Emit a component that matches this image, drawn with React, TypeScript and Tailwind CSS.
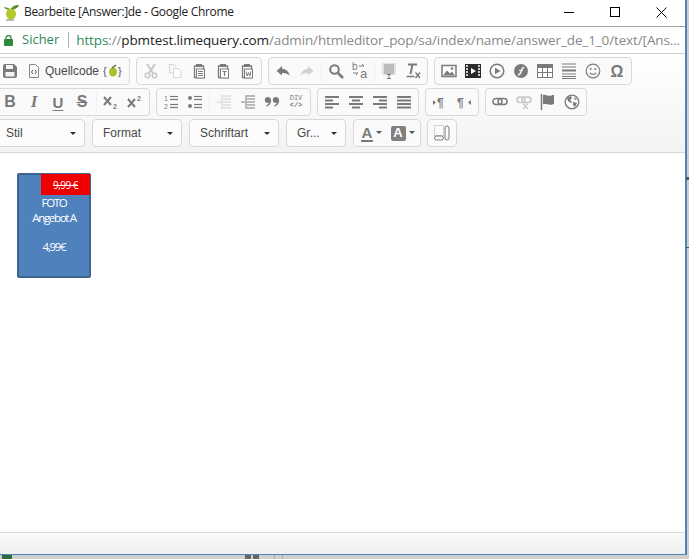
import React from 'react';

const G = '#7a7a7a';
const L = '#c8c8c8';

const Svg = ({ children, w = 16, h = 16 }: { children: React.ReactNode; w?: number; h?: number }) => (
  <svg width={w} height={h} viewBox={`0 0 ${w} ${h}`} fill="none">
    {children}
  </svg>
);

const Lines = ({ x, items, color = G, sw = 1.5 }: { x?: number; items: [number, number, number][]; color?: string; sw?: number }) => (
  <g stroke={color} strokeWidth={sw} transform={`translate(${x ?? 0} 0)`}>
    {items.map(([a, b, y], i) => (
      <path key={i} d={`M${a} ${y}H${b}`} />
    ))}
  </g>
);

const Clip = ({ children }: { children?: React.ReactNode }) => (
  <Svg>
    <path d="M5 3H3.500V14.500H12.500V3H11" stroke={G} strokeWidth="1.300" />
    <rect x="5" y="1" width="6" height="3" fill={G} />
    <rect x="5.500" y="6" width="8" height="9" fill="#fff" stroke={G} />
    {children}
  </Svg>
);

const icons: Record<string, React.ReactNode> = {
  save: (
    <Svg>
      <path d="M1 3a2 2 0 0 1 2-2h9l3 3v9a2 2 0 0 1-2 2H3a2 2 0 0 1-2-2z" fill={G} />
      <rect x="4" y="2" width="7" height="4" fill="#f4f4f4" />
      <rect x="3.500" y="9" width="9" height="4.500" fill="#f4f4f4" />
    </Svg>
  ),
  lime: (
    <Svg w={20}>
      <text x="0" y="12" fontSize="11" fill="#555" fontFamily="Liberation Sans">{'{'}</text>
      <text x="15" y="12" fontSize="11" fill="#555" fontFamily="Liberation Sans">{'}'}</text>
      <ellipse cx="10" cy="9" rx="4" ry="4.500" fill="#a8bf2e" />
      <path d="M9 5l4-3" stroke="#4d6b1c" strokeWidth="1.300" />
    </Svg>
  ),
  cut: (
    <Svg>
      <path d="M4 1l6 9M12 1l-6 9" stroke={L} strokeWidth="2" />
      <circle cx="4.500" cy="12.500" r="2.300" stroke={L} strokeWidth="1.500" />
      <circle cx="11.500" cy="12.500" r="2.300" stroke={L} strokeWidth="1.500" />
    </Svg>
  ),
  copy: (
    <Svg>
      <path d="M2.500 1.500H7L9 4M2.500 1.500V10H6" stroke="#d4d4d4" />
      <path d="M6.500 5.500H11L14 8V14.500H6.500z" stroke="#d4d4d4" fill="#fff" />
    </Svg>
  ),
  paste: <Clip><Lines items={[[7, 12, 8.500], [7, 12, 10.500], [7, 12, 12.500]]} sw={1} /></Clip>,
  pasteT: <Clip><path d="M7.500 8.500h4M9.500 8.500v4.500" stroke={G} strokeWidth="1.200" /></Clip>,
  pasteW: <Clip><path d="M7 8.500l1.200 4.500 1.300-3.500 1.300 3.500L12 8.500" stroke={G} /></Clip>,
  undo: (
    <Svg>
      <path d="M7 3L1.500 8 7 12.500V10c3-.3 5.500.5 7.500 2.500C14 8.500 11 6 7 5.800z" fill={G} />
    </Svg>
  ),
  redo: (
    <Svg>
      <path d="M9 3l5.500 5L9 12.500V10c-3-.3-5.500.5-7.500 2.500C2 8.500 5 6 9 5.800z" fill="#d2d2d2" />
    </Svg>
  ),
  find: (
    <Svg>
      <circle cx="6.500" cy="6.500" r="4.300" stroke={G} strokeWidth="2" />
      <path d="M10 10l5 5" stroke={G} strokeWidth="2.500" />
    </Svg>
  ),
  replace: (
    <Svg w={18} h={20}>
      <text x="1" y="9" fontSize="10" fill={G} fontFamily="Liberation Sans">b</text>
      <text x="9" y="17" fontSize="13" fill={G} fontFamily="Liberation Sans">a</text>
      <path d="M8 5h5l-2-2M2 12h5l-2 2" stroke={G} />
    </Svg>
  ),
  selectAll: (
    <Svg>
      <rect x="1" y="0" width="14" height="12" fill="#e2e2e2" />
      <Lines items={[[3, 13, 2], [3, 13, 4], [3, 13, 6], [3, 13, 8], [3, 13, 10]]} color="#949494" sw={1} />
      <path d="M6 11.500h4M6 15.500h4M8 11v4" stroke={G} />
    </Svg>
  ),
  removeFormat: (
    <Svg>
      <path d="M3 1.500h9M7.500 1.500L5.500 11" stroke={G} strokeWidth="2" />
      <path d="M1.500 13.500h8" stroke={G} strokeWidth="1.500" />
      <path d="M10.500 9.500l4.500 5.500M15 9.500L10.500 15" stroke={G} strokeWidth="1.300" />
    </Svg>
  ),
  image: (
    <Svg>
      <rect x="1" y="2.500" width="14" height="11" fill="#fff" stroke={G} strokeWidth="1.500" />
      <path d="M2 12.500l4-5 3 3 2-2 3 4z" fill={G} />
      <circle cx="11" cy="5.500" r="1.300" fill={G} />
    </Svg>
  ),
  film: (
    <Svg>
      <rect x="0" y="1" width="16" height="14" fill="#2a2a2a" />
      <path d="M6 5l5 3-5 3z" fill="#fff" />
      <path d="M1 3h2M1 6h2M1 9h2M1 12h2M13 3h2M13 6h2M13 9h2M13 12h2" stroke="#fff" strokeWidth="1.300" />
    </Svg>
  ),
  play: (
    <Svg>
      <circle cx="8" cy="8" r="6.800" stroke={G} strokeWidth="1.500" />
      <path d="M6 4.800L11.500 8 6 11.200z" fill={G} />
    </Svg>
  ),
  flash: (
    <Svg>
      <circle cx="8" cy="8" r="7" fill={G} />
      <path d="M5 12c2.500-.3 2.800-2 3.200-4 .4-1.900 1-3.300 3-3.500" stroke="#f6f6f6" strokeWidth="1.400" />
      <path d="M6 7.500h4" stroke="#f6f6f6" />
    </Svg>
  ),
  table: (
    <Svg>
      <rect x="0.500" y="1.500" width="15" height="13" fill="#fff" stroke={G} />
      <rect x="0.500" y="1.500" width="15" height="3.500" fill={G} />
      <path d="M0.500 9.500h15M5.500 5v9M10.500 5v9" stroke={G} />
    </Svg>
  ),
  hr: (
    <Svg>
      <Lines items={[[1, 15, 1], [1, 15, 4], [1, 15, 11], [1, 15, 13.500]]} sw={1} />
      <Lines items={[[1, 15, 7.500]]} sw={2} />
      <Lines items={[[1, 15, 15.500]]} sw={1} />
    </Svg>
  ),
  smile: (
    <Svg>
      <circle cx="8" cy="8" r="6.800" stroke={G} strokeWidth="1.200" />
      <circle cx="5.700" cy="6" r="1" fill={G} />
      <circle cx="10.300" cy="6" r="1" fill={G} />
      <path d="M4.800 9.800c1.500 2 4.900 2 6.400 0" stroke={G} strokeWidth="1.200" />
    </Svg>
  ),
  omega: (
    <Svg>
      <text x="8" y="14" textAnchor="middle" fontSize="16" fontWeight="700" fill={G} fontFamily="Liberation Sans">Ω</text>
    </Svg>
  ),
  bold: <span className="text-[16px] font-bold text-[#7a7a7a]">B</span>,
  italic: <span className="font-['Liberation_Serif'] text-[17px] font-bold italic text-[#7a7a7a]">I</span>,
  underline: <span className="text-[15px] leading-[15px] font-bold text-[#7a7a7a] underline underline-offset-2">U</span>,
  strike: <span className="text-[16px] font-bold text-[#7a7a7a] line-through">S</span>,
  sub: (
    <Svg>
      <path d="M1 3l7 8M8 3l-7 8" stroke={G} strokeWidth="2" />
      <text x="10" y="15" fontSize="7" fontWeight="700" fill={G} fontFamily="Liberation Sans">2</text>
    </Svg>
  ),
  sup: (
    <Svg>
      <path d="M1 5l7 8M8 5l-7 8" stroke={G} strokeWidth="2" />
      <text x="10" y="7" fontSize="7" fontWeight="700" fill={G} fontFamily="Liberation Sans">2</text>
    </Svg>
  ),
  ol: (
    <Svg>
      <text x="1" y="7" fontSize="7" fill={G} fontFamily="Liberation Sans">1</text>
      <text x="1" y="15" fontSize="7" fill={G} fontFamily="Liberation Sans">2</text>
      <Lines items={[[7, 15, 2.500], [7, 15, 5.500], [7, 15, 10.500], [7, 15, 13.500]]} sw={1.200} />
    </Svg>
  ),
  ul: (
    <Svg>
      <circle cx="3" cy="4" r="2" fill={G} />
      <circle cx="3" cy="12" r="2" fill={G} />
      <Lines items={[[7, 15, 2.500], [7, 15, 5.500], [7, 15, 10.500], [7, 15, 13.500]]} sw={1.200} />
    </Svg>
  ),
  outdent: (
    <Svg>
      <Lines color="#d0d0d0" items={[[1, 5, 8], [7, 15, 2], [7, 15, 5], [7, 15, 8], [7, 15, 11], [7, 15, 14]]} sw={1} />
      <path d="M6 1v14" stroke="#d0d0d0" />
    </Svg>
  ),
  indent: (
    <Svg>
      <Lines items={[[1, 5, 8], [7, 15, 2], [7, 15, 5], [7, 15, 8], [7, 15, 11], [7, 15, 14]]} sw={1} />
      <path d="M6 1v14" stroke={G} />
    </Svg>
  ),
  quote: (
    <Svg>
      <circle cx="3.800" cy="6" r="3" fill={G} />
      <circle cx="11.800" cy="6" r="3" fill={G} />
      <path d="M6.500 6c0 3-1.500 5-4 6M14.500 6c0 3-1.500 5-4 6" stroke={G} strokeWidth="1.500" />
    </Svg>
  ),
  div: (
    <span className="flex flex-col items-center text-[7px] leading-[7px] font-['Liberation_Mono'] text-[#7a7a7a]">
      <span>DIV</span>
      <span className="font-bold">{'</>'}</span>
    </span>
  ),
  left: <Svg><Lines items={[[1, 15, 3], [1, 9, 6.500], [1, 15, 10], [1, 9, 13.500]]} sw={2} /></Svg>,
  center: <Svg><Lines items={[[1, 15, 3], [4, 12, 6.500], [1, 15, 10], [4, 12, 13.500]]} sw={2} /></Svg>,
  right: <Svg><Lines items={[[1, 15, 3], [7, 15, 6.500], [1, 15, 10], [7, 15, 13.500]]} sw={2} /></Svg>,
  justify: <Svg><Lines items={[[1, 15, 3], [1, 15, 6.500], [1, 15, 10], [1, 15, 13.500]]} sw={2} /></Svg>,
  ltr: (
    <Svg>
      <path d="M1 6l3 2.500L1 11z" fill={G} />
      <text x="5" y="13" fontSize="12" fontWeight="700" fill={G} fontFamily="Liberation Sans">¶</text>
    </Svg>
  ),
  rtl: (
    <Svg>
      <text x="1" y="13" fontSize="12" fontWeight="700" fill={G} fontFamily="Liberation Sans">¶</text>
      <path d="M15 6l-3 2.500 3 2.500z" fill={G} />
    </Svg>
  ),
  link: (
    <Svg>
      <rect x="1" y="4.500" width="9" height="6" rx="3" stroke={G} strokeWidth="1.500" />
      <rect x="6" y="4.500" width="9" height="6" rx="3" stroke={G} strokeWidth="1.500" />
    </Svg>
  ),
  unlink: (
    <Svg>
      <rect x="1" y="3" width="8" height="5.500" rx="2.700" stroke={L} strokeWidth="1.500" />
      <rect x="6" y="3" width="9" height="5.500" rx="2.700" stroke={L} strokeWidth="1.500" />
      <path d="M7 9.500l5 5.500M12 9.500L7 15" stroke={L} strokeWidth="1.300" />
    </Svg>
  ),
  flag: (
    <Svg>
      <path d="M1.500 0v16" stroke={G} strokeWidth="1.500" />
      <path d="M3 1c3-1 4 .8 6 .8S12 1 14 1v9c-2 .5-3 1-5 .5s-3-1-6-.2z" fill={G} />
    </Svg>
  ),
  globe: (
    <Svg>
      <circle cx="8" cy="8" r="6.800" stroke={G} strokeWidth="1.300" />
      <path d="M3 4l4-2 1 2-2 2 2 2-1 1-3-2zM9 8l4 1-2 4-2-2zM10 3l3 2-2 1z" fill={G} />
    </Svg>
  ),
  textColor: (
    <span className="flex items-center gap-[3px]">
      <span className="border-b-2 border-[#7a7a7a] px-[1px] text-[15px] leading-[15px] font-bold text-[#7a7a7a]">A</span>
      <span className="mt-[-1px] border-x-[3px] border-t-[3px] border-x-transparent border-t-[#555]" />
    </span>
  ),
  bgColor: (
    <span className="flex items-center gap-[3px]">
      <span className="flex h-[15px] w-[15px] items-center justify-center rounded-[2px] bg-[#808080] text-[13px] font-bold text-white">A</span>
      <span className="mt-[-1px] border-x-[3px] border-t-[3px] border-x-transparent border-t-[#555]" />
    </span>
  ),
  maximize: (
    <Svg>
      <rect x="0.500" y="0.500" width="9" height="10" stroke="#aaa" strokeDasharray="1 1" />
      <rect x="11" y="1" width="4" height="14" rx="2" stroke={G} />
      <rect x="0.500" y="11" width="9" height="4" rx="2" stroke={G} />
    </Svg>
  ),
};

const Btn = ({ name }: { name: string }) => (
  <div className="flex h-[22px] w-6 items-center justify-center">{icons[name]}</div>
);

const Sep = () => <div className="mx-[2px] h-[20px] w-px bg-[#f0f0f0]" />;

const Group = ({ children }: { children: React.ReactNode }) => (
  <div className="flex h-7 items-center rounded-[4px] border border-[#d8d8d8] bg-[#fafafa] px-[2px]">{children}</div>
);

const Combo = ({ label, width }: { label: string; width: string }) => (
  <div className={`flex h-7 items-center justify-between rounded-[4px] border border-[#d8d8d8] bg-[#fcfcfc] pl-[10px] pr-[8px] text-[12px] text-[#484848] ${width}`}>
    <span>{label}</span>
    <span className="border-x-[3px] border-t-[3px] border-x-transparent border-t-[#333]" />
  </div>
);

const Row = ({ names }: { names: (string | null)[] }) => (
  <Group>
    {names.map((n, i) => (n ? <Btn key={i} name={n} /> : <Sep key={i} />))}
  </Group>
);

export default function App() {
  return (
    <div className="relative h-[559px] w-[689px] overflow-hidden bg-[#cfcfcf] font-['Liberation_Sans',sans-serif]">
      {/* window behind the popup */}
      <div className="absolute bottom-0 left-[2px] h-[4px] w-[10px] bg-[#2e6b3a]" />
      <div className="absolute bottom-0 left-[245px] h-[4px] w-[6px] bg-[#666]" />
      <div className="absolute bottom-0 left-[253px] h-[4px] w-[6px] bg-[#666]" />
      <div className="absolute bottom-0 left-[274px] h-[4px] w-px bg-[#aaa]" />
      <div className="absolute bottom-0 left-[282px] h-[4px] w-px bg-[#aaa]" />
      <div className="absolute right-0 top-[177px] h-[3px] w-[3px] bg-[#555]" />
      <div className="absolute right-0 top-[247px] h-px w-[3px] bg-[#2e6b3a]" />

      <div className="flex h-[555px] w-[687px] flex-col border-b border-r-2 border-[#4a86b8] bg-white">
        {/* title bar */}
        <div className="flex h-[27px] shrink-0 items-center border-b border-[#a3a3a3] pb-[2px] pl-[3px]">
          <svg className="shrink-0" width="18" height="18" viewBox="0 0 18 18" fill="none">
            <ellipse cx="8" cy="11" rx="5" ry="5.500" fill="#b4c92c" />
            <path d="M8 6c1-2 3-4 8-4-1 3-4 5-8 4zM7 6C5 5 3 4 1 4c1 2 3 3 6 2z" fill="#5c8a24" />
            <path d="M3 17h8" stroke="#777" />
          </svg>
          <span className="ml-[3px] font-['Open_Sans',sans-serif] text-[12px] tracking-[-0.32px] text-[#222]">Bearbeite [Answer:]de - Google Chrome</span>
          <div className="ml-auto flex items-center">
            <div className="mr-[36px] h-px w-[10px] bg-black" />
            <div className="mr-[36px] h-[10px] w-[10px] border border-black" />
            <svg className="mr-[18px]" width="11" height="11" viewBox="0 0 11 11">
              <path d="M0.500 0.500l10 10M10.500 0.500l-10 10" stroke="#000" />
            </svg>
          </div>
        </div>

        {/* address bar */}
        <div className="flex h-[27px] shrink-0 items-center overflow-hidden border-b border-[#cfcfcf] pl-[4px] font-['Open_Sans',sans-serif] text-[13.500px]">
          <svg className="shrink-0" width="9" height="11" viewBox="0 0 9 11" fill="none">
            <rect x="0" y="4" width="9" height="7" rx="1" fill="#2f8a3e" />
            <path d="M2 5V3a2.500 2.500 0 0 1 5 0v2" stroke="#2f8a3e" strokeWidth="1.300" />
          </svg>
          <span className="ml-[9px] text-[13px] text-[#2f8a5a]">Sicher</span>
          <div className="ml-[9px] h-[16px] w-px shrink-0 bg-[#b5b5b5]" />
          <span className="ml-[7px] whitespace-nowrap tracking-[-0.12px] text-[#888]">
            <span className="text-[#2f8a5a]">https</span>://<span className="text-[#222]">pbmtest.limequery.com</span>/admin/htmleditor_pop/sa/index/name/answer_de_1_0/text/[Ans...
          </span>
        </div>

        {/* toolbar */}
        <div className="flex h-[99px] shrink-0 flex-col gap-[3px] overflow-hidden border-b border-[#d8d8d8] bg-gradient-to-b from-white to-[#f3f3f3] pt-[3px]">
          <div className="-ml-[5px] flex gap-[6px]">
            <Group>
              <Btn name="save" />
              <div className="flex h-[22px] w-[79px] items-center pl-[6px] text-[12px] text-[#484848]">
                <svg className="mr-[5px] shrink-0" width="12" height="14" viewBox="0 0 12 14" fill="none">
                  <path d="M1.500 0.500h6l3 3v10h-9z" stroke="#888" />
                  <path d="M5 6L3.500 8 5 10M7 6l1.500 2L7 10" stroke="#555" />
                </svg>
                Quellcode
              </div>
              <div className="mr-[2px]"><Btn name="lime" /></div>
            </Group>
            <Row names={['cut', 'copy', 'paste', 'pasteT', 'pasteW']} />
            <Row names={['undo', 'redo', null, 'find', 'replace', null, 'selectAll', 'removeFormat']} />
            <Row names={['image', 'film', 'play', 'flash', 'table', 'hr', 'smile', 'omega']} />
          </div>
          <div className="-ml-[5px] flex gap-[6px]">
            <Row names={['bold', 'italic', 'underline', 'strike', null, 'sub', 'sup']} />
            <Row names={['ol', 'ul', null, 'outdent', 'indent', 'quote', 'div']} />
            <Row names={['left', 'center', 'right', 'justify']} />
            <Row names={['ltr', 'rtl']} />
            <Row names={['link', 'unlink', 'flag', 'globe']} />
          </div>
          <div className="-ml-[5px] flex gap-[7px]">
            <Combo label="Stil" width="w-[90px]" />
            <Combo label="Format" width="w-[90px]" />
            <Combo label="Schriftart" width="w-[90px]" />
            <Combo label="Gr..." width="w-[60px]" />
            <div className="-mr-px">
              <Group>
                <div className="flex h-[22px] w-[31px] items-center justify-center">{icons.textColor}</div>
                <div className="flex h-[22px] w-[31px] items-center justify-center">{icons.bgColor}</div>
              </Group>
            </div>
            <Group>
              <Btn name="maximize" />
            </Group>
          </div>
        </div>

        {/* editor content */}
        <div className="min-h-0 flex-1 bg-white pl-[17px] pt-[20px]">
          <div className="relative flex h-[105px] w-[74px] flex-col items-center rounded-[2px] border-2 border-[#3f6690] bg-[#4f81bd] pt-[20px] font-['Open_Sans',sans-serif] text-[11.500px] leading-[15px] tracking-[-1.300px] text-white">
            <span>FOTO</span>
            <span>Angebot A</span>
            <span className="mt-[14px]">4,99€</span>
            <div className="absolute -right-[1px] -top-[1px] flex h-[21px] w-[49px] items-center justify-center bg-[#ee0000] pt-[2px] text-[10px] tracking-[-0.5px] line-through">9,99 €</div>
          </div>
        </div>

        {/* bottom bar */}
        <div className="h-[22px] shrink-0 border-t border-[#d8d8d8] bg-gradient-to-b from-[#fafafa] to-[#f0f0f0]" />
      </div>
    </div>
  );
}
